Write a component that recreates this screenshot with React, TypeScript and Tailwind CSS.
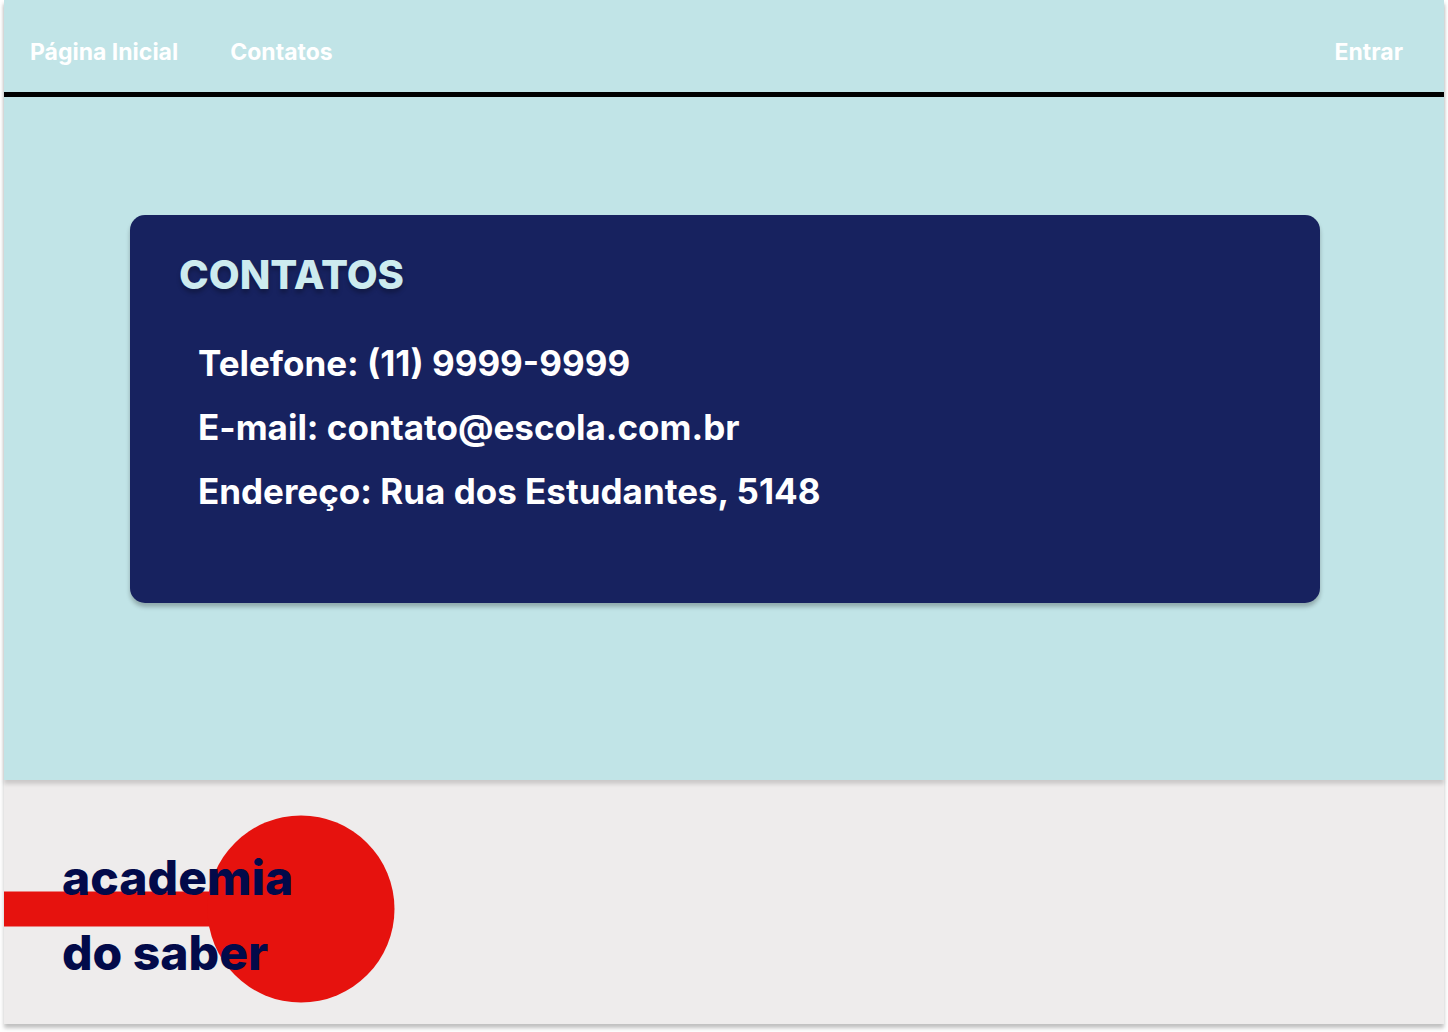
export default function App() {
  return (
    <div className="flex min-h-screen flex-col bg-white px-1 pb-2 font-['Inter',sans-serif] font-bold">
      <div className="flex flex-1 flex-col bg-[#eeecec] shadow-[0_4px_4px_rgba(0,0,0,0.25)]">
        <div className="flex flex-col bg-[#c1e4e7] pb-[177px] shadow-[0_4px_4px_rgba(0,0,0,0.15)]">
          <header className="flex items-center border-b-5 border-black pt-9 pr-[41px] pb-6 pl-[26px] text-[23px] leading-8 text-white">
            <nav className="flex gap-[52px]">
              <a href="#inicio">Página Inicial</a>
              <a href="#contatos">Contatos</a>
            </nav>
            <a href="#entrar" className="ml-auto">Entrar</a>
          </header>
          <main className="mt-[118px] mr-[124px] ml-[126px] rounded-[15px] bg-[#17225f] pt-9 pb-20 pl-[49px] shadow-[0_4px_4px_rgba(0,0,0,0.25)]">
            <h1 className="text-[40px] leading-[48px] font-extrabold text-[#cdebef] text-shadow-[0_4px_4px_rgba(0,0,0,0.25)]">CONTATOS</h1>
            <div className="mt-8 pl-[19px] text-[35px] leading-16 text-white">
              <p>Telefone: (11) 9999-9999</p>
              <p>E-mail: contato@escola.com.br</p>
              <p>Endereço: Rua dos Estudantes, 5148</p>
            </div>
          </main>
        </div>
        <footer className="relative pt-[60px] pb-8 pl-[58px]">
          <svg className="absolute top-0 left-0" width="400" height="244" aria-hidden="true">
            <rect x="0" y="111.5" width="220" height="35" fill="#e6120e" />
            <circle cx="297" cy="129" r="93.5" fill="#e6120e" />
          </svg>
          <p className="relative text-5xl leading-[75px] font-extrabold text-[#020a4a]">academia<br />do saber</p>
        </footer>
      </div>
    </div>
  );
}
